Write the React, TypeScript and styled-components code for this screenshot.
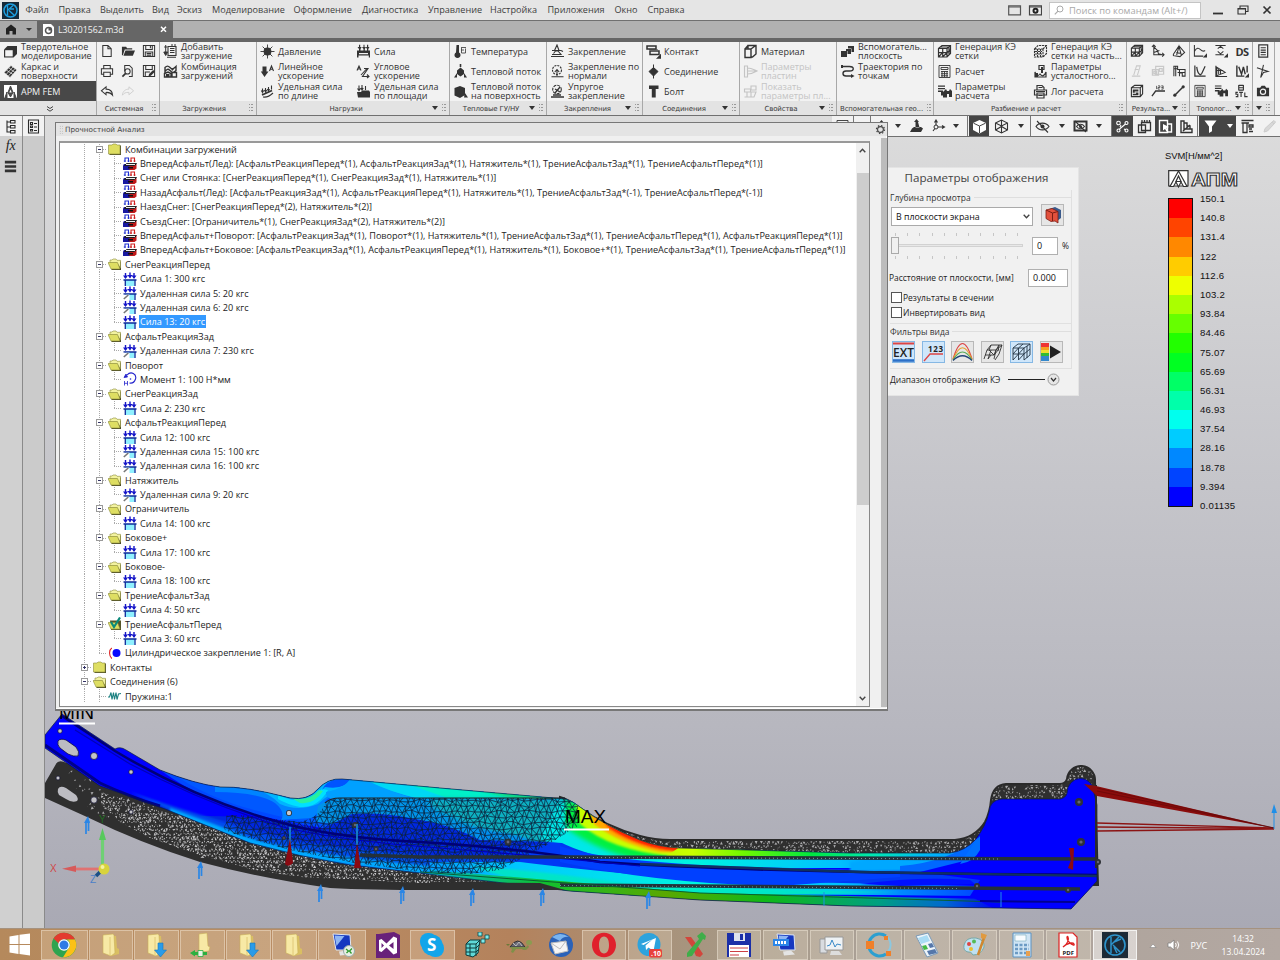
import React, { ReactNode } from 'react';
import styled, { createGlobalStyle, css } from 'styled-components';

const UI = '"Open Sans", "Noto Sans", sans-serif';
const SMALL = '"DejaVu Sans", "Open Sans", sans-serif';

const Global = createGlobalStyle`
  * { box-sizing: border-box; }
  body { margin: 0; font-family: ${UI}; color: #2b2b2b; overflow: hidden; background: #c4c4c8; }
  svg { display: block; flex: none; }
`;

const Screen = styled.div`
  width: 1280px; height: 960px; display: flex; flex-direction: column; overflow: hidden;
`;

/* ---------- menu bar ---------- */
const MenuBar = styled.header`
  height: 21px; flex: none; display: flex; align-items: center; background: #e5e5e5;
  border-bottom: 1px solid #707070; padding-left: 2px;
`;
const Menu = styled.nav`display: flex; margin-left: 6.500px; flex: 1;`;
const MenuItem = styled.span<{ $w: number }>`
  width: ${p => p.$w}px; font-size: 9.1px; line-height: 20px; white-space: nowrap; color: #3c3c3c;
`;
const Search = styled.div`
  width: 152px; height: 17px; background: #fff; border: 1px solid #c4c4c4; display: flex; align-items: center;
  padding-left: 4px; gap: 5px; color: #a9a9a9; font-size: 9.4px; white-space: nowrap; margin: 0 11px 0 7px;
`;
const WindowButtons = styled.div`display: flex; align-items: center; gap: 13px; width: 68px;`;

/* ---------- tab bar ---------- */
const TabBar = styled.div`
  height: 21px; flex: none; display: flex; background: #b1b1b1; border-bottom: 4px solid #666;
`;
const HomeTab = styled.div`
  width: 37px; height: 17px; display: flex; align-items: center; gap: 9px; padding-left: 5px; background: #a9a9a9;
`;
const DocTab = styled.div`
  width: 136px; background: #666; color: #f2f2f2; display: flex; align-items: center; padding-left: 5px; gap: 4px;
  font-size: 8.8px; height: 17px;
`;
const DocName = styled.span`flex: 1; line-height: 17px; padding-top: 1px;`;

/* ---------- ribbon ---------- */
const Ribbon = styled.div`
  height: 74px; flex: none; display: flex; background: #f2f2f2; border-bottom: 1px solid #707070;
`;
const Group = styled.section<{ $w: number }>`
  width: ${p => p.$w}px; flex: none; display: flex; flex-direction: column; border-right: 1px solid #a8a8a8;
`;
const GroupBody = styled.div`display: flex; height: 60px; flex: none; margin-top: -1px;`;
const Column = styled.div<{ $w: number }>`width: ${p => p.$w}px; display: flex; flex-direction: column; flex: none;`;
const Command = styled.div<{ $state?: 'off' | 'on' }>`
  height: 20px; display: flex; align-items: center; gap: 3px; padding-left: 3px; font-size: 9px; line-height: 9px;
  white-space: pre; color: #333; overflow: visible;
  ${p => p.$state === 'off' && css`color: #c4c4c4;`}
  ${p => p.$state === 'on' && css`background: #484848; color: #f4f4f4;`}
`;
const GroupFoot = styled.div`
  flex: 1; background: #e3e3e3; display: flex; align-items: center; font: 7px ${SMALL}; letter-spacing: -0.15px;
  color: #3a3a3a; padding: 0 3px 0 3px; white-space: nowrap; overflow: hidden;
`;
const FootName = styled.span`flex: 1; text-align: center; padding-top: 1px;`;
const Grip = styled.i`
  width: 4px; height: 7px; flex: none; margin-left: 4px; margin-bottom: 2px;
  background: repeating-linear-gradient(#999 0 1px, transparent 1px 3px);
  mask: linear-gradient(90deg, #000 0 1.5px, transparent 1.5px 2.5px, #000 2.5px);
`;
const Caret = styled.i<{ $light?: boolean }>`
  border: 3.5px solid transparent; border-top: 4px solid ${p => (p.$light ? '#fff' : '#333')}; border-bottom: 0; flex: none;
`;
const IconGrid = styled.div<{ $cols: number }>`
  display: grid; grid-template-columns: repeat(${p => p.$cols}, 20.8px); grid-auto-rows: 20px;
  place-items: center; width: 100%; color: #333;
`;
const Dim = styled.span`color: #c9c9c9;`;
const DsText = styled.b`font-size: 11px; letter-spacing: -0.6px; font-weight: 700;`;

/* ---------- work area ---------- */
const Work = styled.div`flex: 1; display: flex; min-height: 0; position: relative;`;
const SideBar = styled.aside<{ $bg: string }>`
  width: 22.5px; flex: none; background: ${p => p.$bg}; border-right: 1px solid #8a8a8a;
  display: flex; flex-direction: column; align-items: center;
`;
const SideButton = styled.div<{ $active?: boolean }>`
  width: 100%; height: 20px; display: flex; justify-content: center; align-items: center;
  background: ${p => (p.$active ? '#f2f2f2' : 'transparent')};
`;
const Fx = styled.i`font: italic 14px "Liberation Serif", serif; color: #222;`;
const Viewport = styled.main`
  flex: 1; position: relative; overflow: hidden;
  background: linear-gradient(#dcdcdc 0, #cacace 35%, #b7b7bf 75%, #a9a9b4 100%);
`;
const Scene = styled.svg`position: absolute; left: 0; top: 0;`;

const ViewToolbar = styled.div`
  position: absolute; right: 0; top: 0; height: 21px; width: 448px; display: flex; align-items: center;
  background: #f2f2f2; border-bottom: 1px solid #707070; color: #333;
`;
const Tool = styled.div<{ $w: number; $active?: boolean; $sep?: boolean }>`
  width: ${p => p.$w}px; height: 20px; display: flex; align-items: center; justify-content: center; gap: 9px; flex: none;
  ${p => p.$active && css`background: #454545; color: #fff;`}
  ${p => p.$sep && css`border-right: 1px solid #777;`}
`;

/* ---------- legend ---------- */
const Legend = styled.div`
  position: absolute; left: 1123px; top: 34px; font-family: "Liberation Sans", sans-serif; color: #111; width: 100px;
`;
const LegendTitle = styled.div`font-size: 9.4px; line-height: 11px; margin-left: -3px;`;
const LegendLogo = styled.div`height: 18px; margin: 9px 0 10px 0;`;
const LegendBody = styled.div`display: flex; gap: 7px;`;
const LegendBar = styled.div`width: 25px; border: 1px solid #111; height: 309px; display: flex; flex-direction: column;`;
const Swatch = styled.div<{ $c: string }>`background: ${p => p.$c}; flex: 1;`;
const LegendValues = styled.div`margin-top: -9px;`;
const LegendValue = styled.div`height: 19.2px; line-height: 19.2px; font-size: 9.6px; letter-spacing: 0.2px;`;

/* ---------- display parameters ---------- */
const Params = styled.div`
  position: absolute; left: 840px; top: 51px; width: 194px; height: 229px; background: #f1f1f1;
  padding-left: 4px; border: 1px solid #e4e4e4; font-size: 8.45px; color: #222; white-space: nowrap;
`;
const ParamsTitle = styled.h2`
  margin: 0; font-size: 11.6px; font-weight: 400; text-align: center; line-height: 20px; height: 22px; color: #444;
  padding-right: 18px; padding-left: 3px;
`;
const FieldSet = styled.div<{ $h: number }>`
  height: ${p => p.$h}px; margin-right: 6px; border-bottom: 1px solid #e0e0e0; border-right: 1px solid #e0e0e0;
`;
const Caption = styled.div`
  line-height: 11px; height: 14px; display: flex; align-items: center; gap: 3px; color: #333;
  &::after { content: ''; flex: 1; border-top: 1px solid #dedede; }
`;
const Row = styled.div<{ $h: number }>`height: ${p => p.$h}px; display: flex; align-items: center;`;
const Select = styled.div`
  width: 142px; height: 19px; border: 1px solid #aaa; background: #fff; display: flex; align-items: center;
  justify-content: space-between; padding: 0 2px 0 4px; font-size: 8.8px; margin: 3px 8px 0 1px; color: #111;
`;
const SquareButton = styled.div<{ $on?: boolean }>`
  width: 23px; height: 22px; display: flex; align-items: center; justify-content: center;
  background: ${p => (p.$on ? '#cfe6fa' : '#e6e6e6')}; border: 1px solid ${p => (p.$on ? '#86b8e4' : '#b8b8b8')};
`;
const SliderBox = styled.div`
  width: 134px; height: 26px; margin-left: 1px; display: flex; flex-direction: column; justify-content: space-between;
`;
const Ticks = styled.div`display: flex; justify-content: space-between; padding: 0 7px 0 4px;`;
const Tick = styled.i`width: 1px; height: 3px; background: #c6c6c6;`;
const Track = styled.div`height: 3px; border: 1px solid #d2d2d2; background: #e8e8e8; display: flex; align-items: center; margin-right: 2px;`;
const Thumb = styled.div`width: 8px; height: 17px; flex: none; background: #f0f0f0; border: 1px solid #aaa; margin-left: -1px;`;
const NumField = styled.div<{ $w: number }>`
  width: ${p => p.$w}px; height: 18px; border: 1px solid #b0b0b0; background: #fff; padding-left: 4px; line-height: 15px; font-size: 9px; color: #111;
`;
const Percent = styled(Row)`gap: 4px; margin-left: 7px;`;
const Distance = styled.span`width: 139px; margin-left: -1px;`;
const Check = styled.label`display: flex; align-items: center; gap: 1px; height: 15.3px; margin-left: 1px;`;
const CheckBox = styled.i`width: 11px; height: 11px; border: 1px solid #555; background: #fff;`;
const FilterRow = styled.div`display: flex; gap: 6.6px; margin: 3px 0 0 2px;`;
const RangeLine = styled.i`width: 37px; border-top: 1px solid #222; margin: 0 2px 0 8px;`;

/* ---------- strength analysis window ---------- */
const Dialog = styled.div`
  position: absolute; left: 55px; top: 6px; width: 833px; height: 589px; background: #f0f0f0; border: 1px solid #777;
  border-width: 1px 1px 2px 1px; display: flex; flex-direction: column; box-shadow: inset -1px -1px 0 #fff;
`;
const DialogTitle = styled.div`
  height: 13px; flex: none; background: #e4e4e4; display: flex; align-items: center; font: 7.25px ${SMALL}; color: #444;
  padding: 0 1px 0 3px; gap: 2px;
`;
const TitleGrip = styled.i`
  width: 4px; height: 9px; background: radial-gradient(#aaa 0.6px, transparent 0.8px) 0 0 / 2.5px 2.5px;
`;
const TitleText = styled.span`flex: 1;`;
const DialogBody = styled.div`flex: 1; display: flex; padding: 5px 0 2px 3px; min-height: 0;`;
const TreeBox = styled.div`
  width: 811px; flex: none; border: 1px solid #888; border-top: 2px solid #999; background: #fff; display: flex; overflow: hidden;
`;
const Tree = styled.div`flex: 1; overflow: hidden; padding-left: 17px; margin-top: -1px;`;
const Scroll = styled.div`width: 13px; background: #f0f0f0; display: flex; flex-direction: column; align-items: center;`;
const ScrollEnd = styled.div<{ $h: number; $low?: boolean }>`
  height: ${p => p.$h}px; display: flex; padding: 5px 0; align-items: ${p => (p.$low ? 'flex-end' : 'flex-start')};
`;
const ScrollThumb = styled.div`width: 12px; height: 333px; background: #cdcdcd;`;
const OuterScroll = styled.div`width: 6px; background: #bcbcbc; margin: -3px 0 0 11px;`;

const TreeRow = styled.div`height: 14.4px; display: flex; align-items: center; white-space: nowrap;`;
const Guide = styled.span<{ $kind: 'line' | 'tee' | 'elbow' | 'blank' }>`
  width: 15px; height: 14.4px; flex: none; display: flex; align-items: center; justify-content: center;
  background-repeat: no-repeat;
  ${p => p.$kind !== 'blank' && css`
    background-image: repeating-linear-gradient(#aaa 0 1px, transparent 1px 2px)
      ${p.$kind !== 'line' ? ', repeating-linear-gradient(90deg, #aaa 0 1px, transparent 1px 2px)' : ''};
    background-size: 1px ${p.$kind === 'elbow' ? '50%' : '100%'}, 8px 1px;
    background-position: 7px 0, 7px 7px;
  `}
`;
const Expander = styled.b<{ $plus?: boolean }>`
  width: 7px; height: 7px; border: 1px solid #9a9a9a; display: block; background-color: #fff; background-repeat: no-repeat;
  background-image: linear-gradient(#336, #336)${p => p.$plus && ', linear-gradient(#336, #336)'};
  background-size: 3px 1px, 1px 3px; background-position: center;
`;
const NodeIcon = styled.span`width: 17px; display: flex; padding-left: 1px; flex: none;`;
const NodeText = styled.span<{ $sel?: boolean }>`
  font-size: 9.1px; line-height: 13px; color: #1c1c1c; padding: 0 1px;
  ${p => p.$sel && css`background: #3399ff; color: #fff;`}
`;

/* ---------- task bar ---------- */
const TaskBar = styled.footer`
  height: 32px; flex: none; display: flex; padding-top: 1px; border-top: 1px solid #a5927f;
  background: linear-gradient(90deg, #b5895c 0, #b98d64 22%, #b4825c 40%, #ab8d72 48%, #a69681 55%, #aaa096 68%, #b3a8a2 100%);
`;
const Task = styled.div<{ $w: number; $tile?: boolean; $active?: boolean }>`
  width: ${p => p.$w - 1.3}px; margin-right: 1.3px; height: 30px; flex: none; display: flex; align-items: center; justify-content: center;
  ${p => p.$tile && css`background: rgba(255,245,225,.22); border: 1px solid rgba(255,248,235,.38);`}
  ${p => p.$active && css`background: rgba(255,255,255,.5); border: 1px solid rgba(255,255,255,.7);`}
`;
const Tray = styled.div`
  flex: 1; display: flex; align-items: center; color: #fff; font-size: 9px; padding-left: 10px; white-space: nowrap;
`;
const Speaker = styled.span`margin-left: 10px;`;
const Lang = styled.span`margin-left: 10px; width: 31px;`;
const Clock = styled.div`font-size: 8.5px; line-height: 13.5px; text-align: center; width: 43px;`;

/* ---------- icons ---------- */
const line = { fill: 'none', stroke: 'currentColor', strokeWidth: 1.1 } as const;
const solid = { fill: 'currentColor' } as const;
const I = ({ children, s = 15 }: { children: ReactNode; s?: number }) => (
  <svg width={s} height={s} viewBox="0 0 15 15">{children}</svg>
);

const icons: Record<string, ReactNode> = {
  solid: <><path d="M1 5.500 4.500 2H14v8l-3.500 3.500H1z" {...solid} /><path d="M2.200 6.200h7.500v6.200H2.200z" fill="#f2f2f2" /></>,
  surface: <path d="M1 8.500 8 1.500l6 4.500-7 7.500zM3.400 6.100l6.600 4.400M5.700 3.800l6.300 4.700M3.200 10.300 10 3M5.400 12 12 4.600" fill="#333" stroke="#f2f2f2" strokeWidth=".7" />,
  apm: <><rect x="1" y="1" width="13" height="13" fill="#fff" /><path d="M7.500 2 5 8.500 7.500 13 10 8.500zM4 14V8L1.800 14M11 14V8l2.200 6" fill="#484848" stroke="#484848" /><path d="M6.300 8.500h2.400L7.500 5.500z" fill="#fff" /></>,
  file: <path d="M3 1.500h5.500L12 5v8.500H3zM8.500 1.500V5H12" {...line} />,
  open: <path d="M1 12V3h4.500l1 1.500H12V6H4l-2 6zM4.800 7H15l-2.300 5.500H2.600z" {...solid} />,
  save: <path d="M1.500 1.500h12v12h-12zM4 1.500v4.300h7V1.500M3.500 13.500V8.500h8v5M9 2v2.500M5 10.300h5M5 12h5" {...line} />,
  print: <path d="M4 5V1.500h7V5M4 11H1.500V5h12v6H11M4 8.800h7v4.700H4z" {...line} />,
  preview: <><path d="M4 8V1.500h5L12 4.500v9H8.500" {...line} /><circle cx="7" cy="8" r="2.800" {...line} /><path d="m5 10-3.500 3.500" stroke="currentColor" strokeWidth="1.800" /></>,
  saveas: <><path d="M1.500 1.500h12v12h-12zM4 1.500v4.300h7V1.500M3.500 13.500V8.500h5" {...line} /><path d="m7 13 .6-2.300L12 6.500l1.800 1.700L9.500 12.500z" {...solid} /></>,
  undo: <path d="M6.500 3 1.500 7.300l5 4.200V9c3.500-.2 5.500.8 7 3-.2-4-3-6.500-7-6.500z" {...line} />,
  redo: <path d="m8.500 3 5 4.300-5 4.200V9c-3.500-.2-5.500.8-7 3 .2-4 3-6.500 7-6.500z" fill="none" stroke="#cfcfcf" />,
  addload: <><path d="M5 2.500h8v9H5zM7 4.500h4.500M7 6.500h4.500M7 8.500h4.500M4 13.300h9" {...line} /><path d="M2.700 1v8M1.200 3h3M.8 8h3.800L2.700 11.500zM9 0v2M12 0v2" stroke="currentColor" fill="currentColor" /></>,
  comb: <><path d="M2 3.500c2-2 3-2 5 0s3 2 6-1v4c-3 3-4 2-6 0S4 5 2 7.500zM1.500 9.500 5 8l3 1.500v3.500H1.500zM9 8.500h4.500V13H9z" {...line} strokeWidth="1.400" /><path d="M3 10h3.500v3H3zM8 4l3 1-2 2z" {...solid} /></>,
  pressure: <><circle cx="7.500" cy="7.500" r="3.900" {...solid} /><path d="M7.500.5v14M.5 7.500h14M2.600 2.600l9.800 9.800M12.400 2.600l-9.800 9.800" stroke="currentColor" strokeWidth=".9" /></>,
  force: <path d="M1 13.500V6.500h2V5L1.500 3H3V.8h1.200V3h1.500L4.500 5v1.500h3V5L6 3h1.500V.8h1V3H10L8.800 5v1.500H11V5L9.800 3H11V.8h1.200V3h1.300L12.300 5v1.500H14v7h-1.200v-2H2.500v2zM3 9v1.200h9V9z" {...solid} />,
  linacc: <><path d="M2.500 2.500h4v5h2l-4 5.500L.8 7.500h1.700z" {...solid} /><path d="m9.500 7 2-5 2 5M10.200 5.300h2.500" {...line} /></>,
  angacc: <path d="M1 6.500 3 2l2 4.500M1.700 5h2.500M5 11 10.500 5M8 4.500h4L6.500 12.500h6M11 10.500l2 2-2 1.500" {...line} />,
  linforce: <><path d="m2 11 10-4.500" {...line} strokeWidth="1.800" /><path d="M2.500 9.500V4.500M5.500 8.500V4M8.500 7V3M11.500 5.500V1.500M1.300 6.500l1.200 2 1.200-2M4.400 6l1.200 2 1-2M7.300 5l1.200 2 1-2M3 13c4 .5 7-1 10-4" {...line} /></>,
  areaforce: <><path d="M1 8h4l1-1.500h7L14 8v5.500H2z" {...solid} /><path d="M3 1.500v5M6 1v5M9.500 2v4M1.500 4.500 3 6.500l1.500-2M4.800 4 6 6l1.300-2" {...line} /></>,
  temp: <><path d="M3.500 1h2.500v7.500a3 3 0 1 1-3 0z" {...solid} /><path d="M8 3.500h5M8 6h3M8.500 4v5h4V4.500" {...line} strokeWidth=".8" /></>,
  heat: <><path d="m7.500 3.500 3.500 3v3.500l-3.500 2.500L4 10V6.500zM1 13.500 4 9v4.500zM14 13.500 11 9v4.500zM6.700 0h1.600v3H6.700z" {...solid} /></>,
  heatsurf: <path d="m1.500 4 5.500-2 5 2v7l-5 3-5.500-2.500zM12 9l3 4.500h-4z" {...solid} />,
  fix: <path d="M1 12.500h13M2 10.500h9L8 7H5.500L3.500 9.500M4.500 6.500 7 1l2 5.500M2 6.500h9l2 1" {...line} />,
  fixn: <><circle cx="7" cy="6" r="4.500" {...line} strokeDasharray="2 1" /><path d="M1.500 12.800h12M7 12V6M4.800 8 7 5.500 9.200 8" {...line} /></>,
  fixe: <><circle cx="7" cy="5.500" r="4.300" {...line} strokeDasharray="3 1" /><path d="M1 13h13M3 11h8M5 9l5-6M5 5l5 3" {...line} strokeWidth="1.300" /></>,
  contact: <><path d="M1 2h9v3H1zM4 7h9v3.500H4z" {...line} strokeWidth="1.500" /><path d="M3 5.500h9M15 10v4.500h-4.500z" {...solid} stroke="currentColor" strokeWidth=".5" /></>,
  joint: <><path d="M7.500.5v14M3 7.500l4.500-4 4.500 4-4.500 4.500z" {...solid} stroke="currentColor" /></>,
  bolt: <path d="M3 1.500h9.500v3.500h-2.800v8.500H5.800V5H3z" {...solid} />,
  material: <><path d="M2 5h6v8.500H2zM5 5V1.500h8V10l-3.500 3H8M5 1.500 2 5M8 5l4-3" {...line} strokeWidth="1.400" /></>,
  plate: <path d="M1.500 2h3v11h-3zM4.500 4c4 0 6 1.500 9.500 3-3.500 2-5.500 3-9.500 3M5 7h8" {...line} />,
  plateshow: <path d="M1.500 5h6v3h-6zM4 8v5M1.500 13h6M8 2h5v4H8zM8 8h5l-2 5H8z" {...line} />,
  plane: <path d="M1 7h6v6H1zM6 5h5v5H7.500V7H6zM8 2h6v6h-2.500V4.500H8z" {...solid} />,
  path: <><path d="M1.500 2.500h8c5 0 5 4.500 0 4.500H6c-4 0-4 5 0 5h6" {...line} strokeWidth="1.400" /><path d="m11 10 3.500 2-3.500 2zM1 1h2v3H1z" {...solid} /></>,
  mesh: <path d="M1.500 4.500 5 1.500h8.500v8L10 13H1.500zM1.500 4.500H10V13M10 4.500l3.500-3M1.500 8.700H10l3.500-3M5.700 4.500V13M1.500 13l4-4.300M10 8.700 5.700 13M4 3h8v8" {...line} strokeWidth="1.200" />,
  meshpart: <path d="M1.500 5 5 1.500h8.500v8L10 13H1.500zM10 5v8M10 5l3.500-3.500M2 5h8M2 7.500h7M2 10h7M4.500 5v8M7.500 5v8" {...line} strokeDasharray="2.200 .8" />,
  calc: <path d="M2 1.500h11v12H2zM4 3.500h7v2H4zM4 7.500h7M4 9.700h7M4 11.800h7M5 7v6M7.500 7v6M10 7v6" {...line} strokeWidth=".9" />,
  calcpar: <><path d="M1 1.500h7v1.200H1zM1 4h7v1.300H1zM1 6.500h5v5H4V8H1zM7 7l2-2 1 2h2l1-2 2 2v6h-3V10h-2v3.500H6V8z" {...solid} /></>,
  fatigue: <><path d="M6 1.500h5v4H6zM2 8c1 4 3 4.500 5 2 2 3 4.500 2 6-2v5H2z" {...line} strokeWidth="1.200" /><path d="M2 9h3v4H2zM8 3h2v6H8z" {...solid} /></>,
  log: <><path d="M4 6V1.500h5l2 2V6M1.500 6h12v5h-12zM4 9h7v5H4z" {...line} strokeWidth="1.200" /><path d="M5.500 3.500h4M3 7.500h9M5.500 11.500h4" {...line} /></>,
  r2: <path d="M3 1v10.500h11M3 3l4 4 1 3.500 4 1M1 3l2-2 2 2M12 9.500l2 2-2 2M3 9l6-2" {...line} />,
  r3: <path d="m1.500 11 6-9 6 7-5 4.500-7-1zM5 12l2.500-9.500L10 12M4.500 9.500l5 .5" {...line} />,
  r4: <path d="M2 13h9M4 12l3-10h4L8 12M5 6h4" {...line} />,
  r5: <path d="M5 2.500h8.500V11H5zM1.500 6H8v6H1.500zM3 8h3v2H3zM9 5h3v3H9z" {...line} strokeWidth="1.300" />,
  r6: <path d="M2 13V2.500h4V6h8v7H11V9.500H8M2 5h4M4 13V2M8 13V6M6 9h8" {...line} />,
  r7: <><path d="M1.500 4 5 1.500h8.500v9L11 13.500H1.500zM1.500 4H11v9.500M11 4l2.500-2.500" {...line} strokeWidth="1.200" /><path d="M3 6h6v2H5v1h4v3H3v-1.500h3.500V9.500H3z" {...solid} /></>,
  r8: <><path d="m1 13 4-5.500h10" {...line} strokeWidth="1.400" /><path d="M6 2v3.500M7.500 2h2v1.800h-2v1.700h2M11 2h2v3.500h-2M11 3.700h2" {...line} strokeWidth=".8" /></>,
  r9: <><path d="M3 12 12 3" stroke="currentColor" strokeWidth="1.600" fill="none" /><circle cx="3" cy="12" r="1.700" {...solid} /><circle cx="12" cy="3" r="1.700" {...solid} /></>,
  t1: <><path d="M1.500 1v12H11M1.500 8C4 3.500 6 4 8 6s3 2.500 5 1" {...line} /><path d="M15 10v4.500h-4.500z" {...solid} /></>,
  t2: <><path d="M1.500 1.500h11M1.500 11.500h9M4 5l3-2.500L10 5M4 8l3 2.500L10 8" {...line} /><path d="M15 10v4.500h-4.500z" {...solid} /></>,
  t4: <path d="M2 1.500v11.500h11.500M4 3c1 8 4 10 5.500 7L13 2.500" {...line} strokeWidth="1.300" />,
  t5: <path d="M2 2v11.500h12M2 3l10 6-10 4M3 4v8M5 5v6M7 6v5M3 7h7" {...line} strokeWidth="1.100" />,
  t6: <><path d="M2 1.500v11.500h8M4 3l3 8 2-8 2 8M13 2v7" {...line} strokeWidth="1.500" /><path d="M15 10v4.500h-4.500z" {...solid} /></>,
  stl: <><path d="M4 1.500h5M4 4h5M4 6.500h5M4 1v6M9 1v6M3 9h-2v2h2v2.500H.8M4.500 9h4M6.500 9v5M10.500 9v4.500h3" {...line} strokeWidth="1.200" /></>,
  list: <path d="M3 1h9.500v13H3zM5 4h5.500M5 6.500h5.500M5 9h5.500M5 11.500h5.500" {...line} strokeWidth="1.300" />,
  cut: <path d="m1 4 12 4-5 1-3 5.500L8 1" {...line} />,
  camera: <><path d="M1 4h3.500L6 2h3.500L11 4h3v9H1z" {...solid} /><circle cx="7.500" cy="8.300" r="2.800" fill="none" stroke="#f2f2f2" strokeWidth="1.200" /></>,
  treeico: <path d="M4 1.500v12M4 3h3M4 8h3M4 13h3M7.500 1.500H12v2.500H7.500zM7.500 6.500H12v2.500H7.500zM7.500 11.500H12V14H7.500z" {...line} />,
  props: <path d="M2.500 1h10v13h-10zM4.500 3.500h2v2h-2zM4.500 7h2v1.500h-2zM4.500 10.500h2v1.500h-2zM8 4.500h3M8 8h3M8 11.500h3" {...line} />,
  burger: <path d="M1 2.500h13M1 7.500h13M1 12.500h13" stroke="#333" strokeWidth="3" />,
  place: <><path d="M3 9.500 5 8h7l2 1.500-2 3.500H1zM6.500 2v6.500h4L9 3h1L7.500 0 5 3h1.500z" {...solid} /></>,
  axes: <><path d="M5 8V1.500M5 8h8M5 8l-3 4M3.500 3.500 5 1l1.500 2.500M11 6.500 13.500 8 11 9.500" {...line} /><circle cx="5" cy="8" r="2" fill="#f2f2f2" stroke="currentColor" /></>,
  cube: <><path d="m1 4 6.500-3L14 4v7l-6.500 3.500L1 11z" {...solid} /><path d="M1.500 4.200 7.500 7l6-2.800M7.500 7v7" stroke="#454545" fill="none" /></>,
  wire: <path d="m1.500 4 6-3L13.500 4v7l-6 3-6-3zM1.500 4l6 3 6-3M7.500 7v7M1.500 11l6-3.500 6 3.500M7.500 1v7" {...line} />,
  eye: <><path d="M1 7.500c3-4.500 10-4.500 13 0-3 4.500-10 4.500-13 0zM2 2l11 11.500" {...line} /><circle cx="7.500" cy="7.500" r="2" {...solid} /></>,
  cam2: <><path d="M1.500 2.500h12v9h-12z" {...line} strokeWidth="2" /><path d="M3.500 7.500c2-3 6-3 8 0-2 3-6 3-8 0zM2 2l11 11" {...line} /><circle cx="7.500" cy="7.500" r="1.500" {...solid} /></>,
  snap: <><circle cx="3.500" cy="4" r="1.800" {...line} /><circle cx="11.500" cy="4" r="1.500" {...line} /><circle cx="3.500" cy="11.500" r="1.500" {...line} /><circle cx="11.500" cy="11.500" r="1.500" {...line} /><path d="m4.500 10 6-5M5 8l1-2M9 10l2 1" {...line} /></>,
  grid2: <path d="M4.500 3.500h9v8h-9zM1.500 6h7v7.500h-7zM5 1v2M7.500 1v2M10 1v2M12.500 1v2" {...line} strokeWidth="1.300" />,
  sel: <><path d="M1.500 1.500h8v12h-8zM9.500 5h4v8h-4z" {...line} strokeWidth="1.400" /><path d="m5 5 6 3-2.500 1 1.500 3-1.500.5L7 10l-2 1.500z" {...solid} /></>,
  ruler: <path d="M2 2h3v8h8v3.500H2zM5 4h3v3h3v3M4 12l7-6" {...line} strokeWidth="1.400" />,
  funnel: <path d="M1.500 1.500h12L9 7.500v4.800L6 14V7.500z" {...solid} />,
  scheme: <path d="M1.500 1.500h12M1.500 4H9M3 4v9.500h4V4M9 6h4v2H9zM9 10h3M9 12.500h4" {...line} strokeWidth="1.300" />,
  pen: <path d="m2 13 1-3.500L10 3l2 2-6.500 7zM10 3l2-1.500L13.500 3 12 5" fill="#d8d8d8" stroke="#ccc" />,
};
const Icon = ({ n, s }: { n: string; s?: number }) => <I s={s}>{icons[n]}</I>;

const Gear = () => (
  <svg width="11" height="11" viewBox="0 0 11 11">
    <circle cx="5.500" cy="5.500" r="2.900" fill="none" stroke="#444" strokeWidth="1.100" />
    <circle cx="5.500" cy="5.500" r="4" fill="none" stroke="#444" strokeWidth="1.300" strokeDasharray="1.400 1.740" />
  </svg>
);
const Chevron = ({ up }: { up?: boolean }) => (
  <svg width="7" height="5" viewBox="0 0 7 5"><path d={up ? 'M.7 4.200 3.500 1.300 6.300 4.200' : 'M.7.8 3.500 3.700 6.300.8'} fill="none" stroke="#444" strokeWidth="1.400" /></svg>
);

/* ---------- ribbon data ---------- */
type Cmd = [string, string, ('off' | 'on')?];
const groups: { name: string; w: number; caret?: boolean; cols: { w: number; items: Cmd[] }[] }[] = [
  { name: 'Загружения', w: 97, cols: [{ w: 96, items: [['addload', 'Добавить\nзагружение'], ['comb', 'Комбинация\nзагружений']] }] },
  { name: 'Нагрузки', w: 193, caret: true, cols: [
    { w: 96, items: [['pressure', 'Давление'], ['linacc', 'Линейное\nускорение'], ['linforce', 'Удельная сила\nпо длине']] },
    { w: 96, items: [['force', 'Сила'], ['angacc', 'Угловое\nускорение'], ['areaforce', 'Удельная сила\nпо площади']] }] },
  { name: 'Тепловые ГУ/НУ', w: 97, caret: true, cols: [{ w: 96, items: [['temp', 'Температура'], ['heat', 'Тепловой поток'], ['heatsurf', 'Тепловой поток\nна поверхность']] }] },
  { name: 'Закрепления', w: 96, caret: true, cols: [{ w: 96, items: [['fix', 'Закрепление'], ['fixn', 'Закрепление по\nнормали'], ['fixe', 'Упругое\nзакрепление']] }] },
  { name: 'Соединения', w: 97, caret: true, cols: [{ w: 96, items: [['contact', 'Контакт'], ['joint', 'Соединение'], ['bolt', 'Болт']] }] },
  { name: 'Свойства', w: 97, caret: true, cols: [{ w: 96, items: [['material', 'Материал'], ['plate', 'Параметры\nпластин', 'off'], ['plateshow', 'Показать\nпараметры пл...', 'off']] }] },
  { name: 'Вспомогательная гео...', w: 97, cols: [{ w: 96, items: [['plane', 'Вспомогатель...\nплоскость'], ['path', 'Траектория по\nточкам']] }] },
  { name: 'Разбиение и расчет', w: 193, cols: [
    { w: 96, items: [['mesh', 'Генерация КЭ\nсетки'], ['calc', 'Расчет'], ['calcpar', 'Параметры\nрасчета']] },
    { w: 96, items: [['meshpart', 'Генерация КЭ\nсетки на часть...'], ['fatigue', 'Параметры\nусталостного...'], ['log', 'Лог расчета']] }] },
];
const menu: [string, number][] = [['Файл', 33], ['Правка', 41.5], ['Выделить', 52], ['Вид', 25], ['Эскиз', 35], ['Моделирование', 81.5], ['Оформление', 68.5], ['Диагностика', 66], ['Управление', 62], ['Настройка', 57.5], ['Приложения', 67], ['Окно', 33], ['Справка', 50]];

/* ---------- tree data ---------- */
type Kind = 'folder' | 'open' | 'check' | 'comb' | 'force' | 'remote' | 'moment' | 'cyl' | 'spring';
type Node = { d: number; t: string; k: Kind; last?: boolean; sel?: boolean; exp?: '-' | '+' };
const f = (t: string, k: Kind = 'open'): Node => ({ d: 2, t, k, exp: '-' });
const c = (t: string, k: Kind = 'force', last = false, sel = false): Node => ({ d: 3, t, k, last, sel });
const nodes: Node[] = [
  f('Комбинации загружений', 'folder'),
  c('ВпередАсфальт(Лед): [АсфальтРеакцияПеред*(1), АсфальтРеакцияЗад*(1), Натяжитель*(1), ТрениеАсфальтЗад*(1), ТрениеАсфальтПеред*(1)]', 'comb'),
  c('Снег или Стоянка: [СнегРеакцияПеред*(1), СнегРеакцияЗад*(1), Натяжитель*(1)]', 'comb'),
  c('НазадАсфальт(Лед): [АсфальтРеакцияЗад*(1), АсфальтРеакцияПеред*(1), Натяжитель*(1), ТрениеАсфальтЗад*(-1), ТрениеАсфальтПеред*(-1)]', 'comb'),
  c('НаездСнег: [СнегРеакцияПеред*(2), Натяжитель*(2)]', 'comb'),
  c('СъездСнег: [Ограничитель*(1), СнегРеакцияЗад*(2), Натяжитель*(2)]', 'comb'),
  c('ВпередАсфальт+Поворот: [АсфальтРеакцияЗад*(1), Поворот*(1), Натяжитель*(1), ТрениеАсфальтЗад*(1), ТрениеАсфальтПеред*(1), АсфальтРеакцияПеред*(1)]', 'comb'),
  c('ВпередАсфальт+Боковое: [АсфальтРеакцияЗад*(1), АсфальтРеакцияПеред*(1), Натяжитель*(1), Боковое+*(1), ТрениеАсфальтЗад*(1), ТрениеАсфальтПеред*(1)]', 'comb', true),
  f('СнегРеакцияПеред'), c('Сила 1: 300 кгс'), c('Удаленная сила 5: 20 кгс', 'remote'), c('Удаленная сила 6: 20 кгс', 'remote'), c('Сила 13: 20 кгс', 'force', true, true),
  f('АсфальтРеакцияЗад'), c('Удаленная сила 7: 230 кгс', 'remote', true),
  f('Поворот'), c('Момент 1: 100 Н*мм', 'moment', true),
  f('СнегРеакцияЗад'), c('Сила 2: 230 кгс', 'force', true),
  f('АсфальтРеакцияПеред'), c('Сила 12: 100 кгс'), c('Удаленная сила 15: 100 кгс', 'remote'), c('Удаленная сила 16: 100 кгс', 'remote', true),
  f('Натяжитель'), c('Удаленная сила 9: 20 кгс', 'remote', true),
  f('Ограничитель'), c('Сила 14: 100 кгс', 'force', true),
  f('Боковое+'), c('Сила 17: 100 кгс', 'force', true),
  f('Боковое-'), c('Сила 18: 100 кгс', 'force', true),
  f('ТрениеАсфальтЗад'), c('Сила 4: 50 кгс', 'force', true),
  f('ТрениеАсфальтПеред', 'check'), c('Сила 3: 60 кгс', 'force', true),
  { d: 2, t: 'Цилиндрическое закрепление 1: [R, A]', k: 'cyl', last: true },
  { d: 1, t: 'Контакты', k: 'folder', exp: '+' },
  { d: 1, t: 'Соединения (6)', k: 'open', exp: '-' },
  { d: 2, t: 'Пружина:1', k: 'spring' },
];

const forceArt = (
  <>
    <path d="M3 8h8.500v6H3z" fill="#8ff0ff" />
    <path d="M2.500 1v5M7 .5v4.500M11 1v5" stroke="#1414c8" strokeWidth="1.400" />
    <path d="M0 3.500h5L2.500 7zM4.500 3h5L7 6.500zM8.500 3.500h5L11 7z" fill="#1414c8" />
    <path d="M.5 8H13.500M2.300 8v6M12 8v6" stroke="#0a2a9a" strokeWidth="1.300" fill="none" />
  </>
);
const nodeArt: Record<Kind, ReactNode> = {
  folder: <><path d="M1.500 3.500H13v9.500H1.500z" fill="#55552a" /><path d="M.5 3h3.500l1-1h3l1 1H12v9H.5z" fill="#dede62" stroke="#8c8c3c" strokeWidth=".6" /></>,
  open: <><path d="M3.500 4.500H13V13H3.500z" fill="#4c4c26" /><path d="M2 3h2l1-1h3l1 1.300h3.500V11L9 6H2z" fill="#f2f2a0" stroke="#8c8c3c" strokeWidth=".6" /><path d="M0 5.500h9.500L12 12H3z" fill="#dede62" stroke="#8c8c3c" strokeWidth=".6" /></>,
  check: <><path d="M2 3.500h11V13H3z" fill="#55552a" /><path d="M0 5.500h9.500L12 12H3z" fill="#dede62" stroke="#8c8c3c" strokeWidth=".6" /><path d="m3 5 3 5 6-9.500" fill="none" stroke="#0a8a7a" strokeWidth="2.200" /></>,
  comb: <>
    <path d="M2 5V1h3.500V5M.8 4h2M4.500 4h2" fill="none" stroke="#2030d0" strokeWidth="1.100" /><path d="M8 5V1h3.500V5M7 4h2M10.500 4h2" fill="none" stroke="#d02020" strokeWidth="1.100" />
    <path d="M1 7h6v6H0V8.500z" fill="#1818a0" /><path d="M6.500 7h7v4.500L11.500 13h-5z" fill="#c01818" /><path d="m1.500 8.500 2-2h10l-2 2z" fill="#eee" stroke="#111" strokeWidth=".9" /><path d="M5 10h5v1.500H5z" fill="#111" />
  </>,
  force: forceArt,
  remote: <>{forceArt}<path d="M0 8.700h6.500V14H0z" fill="#fff" /><path d="m.8 13 4.500-4" stroke="#777" strokeWidth="1.600" /></>,
  moment: <><path d="M4 3c4-4.500 10-1 8.500 4-1 3-3.500 4.500-6 4" fill="none" stroke="#2222cc" strokeWidth="1.100" /><path d="M1.500 13.500v-4.500M4.500 13.500v-4.500M1.500 11.300h3M1 5.500l3.500-.5L3 2z" stroke="#2222cc" fill="#2222cc" strokeWidth=".8" /><circle cx="7.500" cy="7" r=".8" fill="#2222cc" /></>,
  cyl: <><circle cx="8.500" cy="7" r="4" fill="#0a0aff" /><path d="M3.800 2C.8 4 .8 10 3.800 12.500" fill="none" stroke="#d22" strokeWidth="1.100" /></>,
  spring: <path d="M0 8h1.500L3 3.500l1 7 1.500-7 1 7 1.500-7 1 7L10.500 5l2.500-.5" fill="none" stroke="#1a8080" strokeWidth="1.100" />,
};

const TreeLine = ({ n }: { n: Node }) => {
  const guides: ReactNode[] = [];
  for (let d = 1; d < n.d; d++) guides.push(<Guide key={d} $kind="line" />);
  return (
    <TreeRow>
      {guides}
      <Guide $kind={n.last ? 'elbow' : 'tee'}>{n.exp && <Expander $plus={n.exp === '+'} />}</Guide>
      <NodeIcon><svg width="14" height="14" viewBox="0 0 14 14">{nodeArt[n.k]}</svg></NodeIcon>
      <NodeText $sel={n.sel}>{n.t}</NodeText>
    </TreeRow>
  );
};

/* ---------- model ---------- */
let seed = 7;
const rnd = () => ((seed = (seed * 16807) % 2147483647) / 2147483647);
const makeMesh = (x0: number, y0: number, x1: number, y1: number, s: number, fill = 0.62) => {
  const cols = Math.ceil((x1 - x0) / s), rows = Math.ceil((y1 - y0) / s);
  const pts = Array.from({ length: rows + 1 }, (_, r) => Array.from({ length: cols + 1 }, (_, k) =>
    [x0 + (k + (r % 2) * 0.5) * s + (rnd() - 0.5) * s * 0.6, y0 + r * s + (rnd() - 0.5) * s * 0.6]));
  let d = '';
  let spots = '';
  const p = (a: number[]) => a[0].toFixed(1) + ' ' + a[1].toFixed(1);
  const tri = (a: number[], b: number[], e: number[]) => {
    d += 'M' + p(a) + 'L' + p(b) + 'L' + p(e) + 'z';
    if (rnd() < fill) {
      const cx = (a[0] + b[0] + e[0]) / 3, cy = (a[1] + b[1] + e[1]) / 3, q = 0.3 + rnd() * 0.35;
      const sh = (v: number[]) => p([cx + (v[0] - cx) * q, cy + (v[1] - cy) * q]);
      spots += 'M' + sh(a) + 'L' + sh(b) + 'L' + sh(e) + 'z';
    }
  };
  for (let r = 0; r < rows; r++) for (let k = 0; k < cols; k++) {
    const a = pts[r][k], b = pts[r][k + 1], e = pts[r + 1][k], g = pts[r + 1][k + 1];
    if (r % 2) { tri(a, b, g); tri(a, g, e); } else { tri(a, b, e); tri(b, g, e); }
  }
  return { d, spots };
};
const tabMesh = makeMesh(225, 795, 600, 885, 5.6);
const bodySpots = makeMesh(100, 780, 570, 890, 4, 0.85);
const thinSpots = makeMesh(45, 765, 300, 885, 4.5, 0.22);
const rightSpots = makeMesh(570, 765, 1100, 860, 4.2, 0.75);

const DARK_LEFT = 'M45 798V783L56 764Q58 760 64 762L85 770L120 778L180 800L300 830L420 850L640 850L640 889L430 890Q370 890 330 888Q260 878 200 862Q140 843 87 817Z';
const DARK_RIGHT = 'M560 797Q568 799 580 808Q605 826 640 836Q655 840 670 840H955Q975 838 985 822Q990 812 991 800Q993 785 1006 784H1060Q1065 784 1067 779A14 14 0 0 1 1095 781L1098 885H560Z';
const SKIN = 'M45 748V735L62 714L115 749Q120 746 126 750L160 770Q195 784 220 787Q245 786 290 798Q308 801 318 789Q328 778 342 779L440 788L565 799Q573 801 580 807Q605 826 640 840Q658 847 680 848L850 853H950Q965 851 975 840Q986 826 989 812Q990 800 1002 799H1060Q1066 798 1067 793A13 14 0 0 1 1094 793L1097 805V881L1071 909L1000 908L850 906L700 900L570 891L420 873L350 865Q300 857 250 843Q200 823 165 809Q140 800 100 786Z';

const arrows = [[87, 817], [200, 862], [320, 885], [402, 887], [472, 889], [542, 889], [648, 892]];
const holes = [[289, 813, 3], [355, 825, 3], [508, 842, 3.5], [1079, 802, 4], [1081, 842, 4], [977, 886, 3], [1068, 890, 3], [1098, 862, 3], [376, 849, 2.5], [284, 838, 2]];
const wingHoles = [[60, 731, 2.2], [94, 756, 3.5], [131, 772, 2.2], [58, 778, 2], [94, 800, 3.2], [131, 812, 2]];

const Model = () => (
  <Scene width="1235" height="812" viewBox="45 116 1235 812">
    <defs>
      <clipPath id="skin"><path d={SKIN} /></clipPath>
      <clipPath id="tab"><path d="M190 816L240 815L300 822Q318 818 325 805Q330 798 340 798H565L578 806V826L545 846L500 870L470 874L420 872L350 862L290 850L235 834Z" /></clipPath>
      <clipPath id="dl"><path d="M80 785L120 798L150 808L200 822L250 842L300 856L420 872L560 881H500L420 883L300 877L250 869L200 855L150 838L120 822Z" /></clipPath>
      <clipPath id="dw"><path d="M64 768L90 776L300 850V868L200 858L90 810L80 795Z" /></clipPath>
      <clipPath id="dr"><path d={DARK_RIGHT} /></clipPath>
      <linearGradient id="hot" x1="565" x2="990" y1="0" y2="0" gradientUnits="userSpaceOnUse">
        <stop offset="0" stopColor="#1fe070" /><stop offset=".15" stopColor="#b8f000" /><stop offset=".3" stopColor="#c8ff00" />
        <stop offset=".42" stopColor="#70f800" /><stop offset=".58" stopColor="#00e840" /><stop offset=".72" stopColor="#00e8b0" /><stop offset=".88" stopColor="#00b8ff" /><stop offset="1" stopColor="#0048ff" />
      </linearGradient>
      <linearGradient id="aqua" x1="400" x2="985" y1="0" y2="0" gradientUnits="userSpaceOnUse">
        <stop offset="0" stopColor="#0090ff" /><stop offset=".2" stopColor="#00c8ff" /><stop offset=".5" stopColor="#00f4e0" />
        <stop offset=".75" stopColor="#00c0ff" /><stop offset="1" stopColor="#0040ff" />
      </linearGradient>
      <linearGradient id="low" x1="430" x2="990" y1="0" y2="0" gradientUnits="userSpaceOnUse">
        <stop offset="0" stopColor="#00b8d0" /><stop offset=".2" stopColor="#10c030" /><stop offset=".42" stopColor="#5aa800" />
        <stop offset=".6" stopColor="#10b818" /><stop offset=".8" stopColor="#00a080" /><stop offset=".92" stopColor="#0068d0" /><stop offset="1" stopColor="#0010f0" />
      </linearGradient>
      <filter id="soft"><feGaussianBlur stdDeviation="2.500" /></filter>
      <filter id="soft1"><feGaussianBlur stdDeviation="1.200" /></filter>
    </defs>

    <path d={DARK_LEFT} fill="#2f2f2f" />
    <path d={bodySpots.spots} fill="#c6c6c8" clipPath="url(#dl)" />
    <path d={thinSpots.spots} fill="#a8a8aa" clipPath="url(#dw)" />
    <path d={DARK_RIGHT} fill="#2f2f2f" />
    <path d={rightSpots.spots} fill="#b9b9bb" clipPath="url(#dr)" opacity=".9" />
    <path d={DARK_RIGHT} fill="none" stroke="#2a2a2a" strokeWidth="2" />

    <path d={SKIN} fill="#0000ff" />
    <g clipPath="url(#skin)">
      {/* left wing bands */}
      <path d="M150 762Q190 795 245 812Q300 826 350 832L640 840V700H148z" fill="#0048ff" />
      <path d="M170 772Q210 800 262 812Q300 822 360 832L600 850V700H170z" fill="#0058ff" />
      <path d="M215 700V792Q258 792 275 803Q286 812 281 820L312 818Q320 812 326 800L350 782L600 850V700z" fill="#0084ff" />
      <path d="M240 784Q268 791 280 804Q298 812 318 804Q328 794 342 790L380 788L600 850V700H240z" fill="#00b4ff" />
      <path d="M278 795Q305 808 322 789L328 790Q318 808 300 807Q286 804 278 799z" fill="#00e0ff" />
      <path d="M290 797Q308 803 319 790L323 791Q314 805 300 803z" fill="#28f0a0" />
      <path d="M322 790Q328 776 352 779Q345 790 325 787z" fill="#0054ff" />
      <path d="M350 779L372 782Q390 792 420 800H335Q325 798 326 792Q345 788 350 779z" fill="#00a0ff" />
      <path d="M366 780L440 786L565 799L580 808V830L470 805L420 799Q390 792 366 780z" fill="#00d8f4" />
      <path d="M405 783L440 788L565 799L570 808L450 799z" fill="#00f0c8" />
      <path d="M480 791L565 798L590 814L570 822L520 800z" fill="#10dc80" filter="url(#soft1)" />
      {/* tab */}
      <path d="M318 806Q330 798 345 798H500L560 799L580 808V850H430Q360 825 316 822z" fill="#0094e8" />
      <path d="M430 799H570V846H530Q480 832 430 806z" fill="#10b0c0" filter="url(#soft)" />
      <path d="M430 822Q480 828 520 836L545 846H430z" fill="#0090f0" filter="url(#soft1)" />
      <path d="M200 816Q270 815 320 830L352 814Q380 812 410 818Q450 824 480 840L560 842L600 850V870L330 850L290 840z" fill="#0028e0" />
      {/* lower flange of the left part */}
      <path d="M120 790Q230 835 310 852L420 862L640 876V915L420 880L230 850z" fill="#0018c0" />
      <path d="M130 792Q230 826 300 842Q400 858 560 862V872L420 876L300 862L190 820z" fill="#0060e8" opacity=".8" filter="url(#soft1)" />
      <path d="M170 808Q220 826 250 838Q300 854 430 866L560 880V894L420 874L300 858Q240 845 170 812z" fill="#00a8ff" filter="url(#soft1)" />
      {/* high stress arc */}
      <path d="M560 800L600 822L690 848L820 852L820 862H600Q575 850 540 838z" fill="#00e8e8" filter="url(#soft1)" />
      <path d="M566 800L700 848L780 850V860H640Q600 852 566 828z" fill="#00f040" filter="url(#soft)" />
      <path d="M576 804L640 834L740 846V856H670Q610 850 580 824z" fill="#c8ff00" filter="url(#soft1)" />
      <path d="M588 812L640 836L700 846V852H660Q620 844 594 824z" fill="#ffa800" filter="url(#soft1)" />
      <path d="M604 822Q640 842 682 848L676 851Q640 848 610 829z" fill="#ff2000" filter="url(#soft1)" />
      <path d="M680 847L990 853V860H660z" fill="url(#hot)" />
      <path d="M560 857H990V868H700L600 862z" fill="url(#aqua)" />
      <path d="M500 856Q535 840 562 843Q580 852 620 862L720 870H985V884H700L560 872z" fill="#0038f4" />
      <path d="M430 862H520Q600 872 700 880L980 886V896L640 893L430 876z" fill="url(#aqua)" />
      <path d="M560 846Q600 860 720 866L900 871V877L780 886Q660 884 560 862z" fill="#0040ff" />
      <path d="M470 866Q540 870 640 886L900 892L640 900L540 888z" fill="#00e8c0" filter="url(#soft1)" opacity=".85" />
      <path d="M430 870L560 881L700 893L990 899V912H700L430 880z" fill="url(#low)" />
      {/* right block */}
      <path d="M850 862Q900 856 950 854L978 848V870L850 872z" fill="#00a8ff" filter="url(#soft1)" />
      <path d="M900 866Q950 862 978 838V870L900 872z" fill="#0068ff" />
      <path d="M1100 700H985V836L968 860L920 872L980 880L970 896L1000 912H1100z" fill="#0000ff" />
      <path d="M860 884Q920 876 970 880L975 884L900 886z" fill="#0010ff" />
      <path d="M976 840L980 836V850Q974 862 960 864z" fill="#0070ff" />
    </g>

    {/* mesh over the tab */}
    <path d={tabMesh.d} fill="none" stroke="#10223c" strokeWidth=".55" clipPath="url(#tab)" opacity=".85" />
    <path d="M325 803Q330 798 340 798H565" fill="none" stroke="#222" strokeWidth="1.200" />

    {/* flanges and edges */}
    <path d="M62 716L115 751Q200 802 290 825Q340 838 420 842Q520 848 600 862Q760 873 1097 875" fill="none" stroke="#000078" strokeWidth="2.600" />
    <path d="M75 730L130 764Q210 806 290 829Q360 843 440 848Q540 856 640 866" fill="none" stroke="#0000b8" strokeWidth="1.200" />
    <path d="M45 745L100 783Q130 797 160 806" fill="none" stroke="#00008c" strokeWidth="3" />
    <path d="M360 855L420 857H565L1097 859" fill="none" stroke="#24303a" strokeWidth="3.600" />
    <path d="M565 857.500L1000 859" fill="none" stroke="#8aa" strokeWidth=".9" strokeDasharray="1 3" />
    <path d="M560 885L1080 889" fill="none" stroke="#24303a" strokeWidth="3.600" />
    <path d="M560 885.500L960 888.500" fill="none" stroke="#6a9" strokeWidth=".9" strokeDasharray="1 3" />
    <path d="M640 864L860 872L1097 876" fill="none" stroke="#103060" strokeWidth="2.400" />
    <path d="M420 872L700 893L1000 902" fill="none" stroke="#0a6030" strokeWidth="1" />
    <path d="M980 901L1075 902" fill="none" stroke="#000090" strokeWidth="2" />
    <path d={SKIN} fill="none" stroke="#10203a" strokeWidth=".7" />
    <path d="M1096 785V868" stroke="#2b2b2b" strokeWidth="2" />
    <path d="M430 890H565L540 883L430 882z" fill="#2f2f2f" />

    {/* slots and holes */}
    <path d="M58 741Q60 738 66 740L76 747Q80 752 78 756Q74 757 68 754L60 748Q57 745 58 741z" fill="#bcbcc2" stroke="#003" strokeWidth=".7" />
    <path d="M58 789Q60 785 66 788L76 795Q79 799 77 801Q72 803 66 799L59 795Q57 792 58 789z" fill="#bcbcc2" />
    {wingHoles.map(([x, y, r], i) => <circle key={i} cx={x} cy={y} r={r} fill="#c4c4c8" stroke="#113" strokeWidth=".7" />)}
    {holes.map(([x, y, r], i) => <g key={i}><circle cx={x} cy={y} r={r} fill="#2e3136" /><circle cx={x} cy={y} r={r * 0.4} fill="#667" /></g>)}
    <circle cx="289" cy="813" r="2.200" fill="#c8c8cc" />

    {/* remote force cone */}
    <path d="M1084 784L1096 786L1274 828L1097 796z" fill="#8b0c0c" />
    <path d="M1097 823L1274 828M1097 827L1274 828.500M1097 831L1274 829" stroke="#8b1414" strokeWidth="1.300" />
    <path d="M1097 788L1274 828M1097 791L1274 828" stroke="#5e0808" strokeWidth=".6" />

    {/* loads */}
    <path d="M290 827V845M357 824V845" stroke="#1890d0" strokeWidth="1.600" />
    <path d="M290 838L293 863Q288 868 285 864zM357 843L361 868L354 868zM1069 848L1074 848L1073 870L1068 868L1071 860z" fill="#8b0a12" />
    {arrows.map(([x, y], i) => (
      <g key={i}><path d={`M${x - 1} ${y + 17}V${y + 6}M${x + 1.5} ${y + 14}V${y + 4}`} stroke="#2a86e6" strokeWidth="1.700" /><path d={`M${x - 3} ${y + 6}L${x + 1} ${y - 1}L${x + 3} ${y + 6}z`} fill="#2a86e6" /></g>
    ))}
    <path d="M1274 829V808M824 892V906M1001 892V907" stroke="#1f8fe8" strokeWidth="1" />
    <path d="M1271.500 813L1274 804L1277 813z" fill="#1f8fe8" />

    {/* coordinate axes */}
    <path d="M102.500 868V838" stroke="#6fd074" strokeWidth="3.200" /><path d="M99 840L102.500 828L106 840z" fill="#57c95c" />
    <path d="M100 869H72" stroke="#e07272" strokeWidth="2.800" /><path d="M76 865.500L62 868.800L76 872z" fill="#d65a5a" />
    <path d="M102 870L96 876" stroke="#1b4f86" strokeWidth="3.500" />
    <circle cx="104" cy="869" r="5.500" fill="#d8d33c" /><circle cx="102.500" cy="867" r="2" fill="#f5f2a0" />
    <g fontFamily="Liberation Sans, sans-serif" fontSize="10">
      <text x="50" y="872" fill="#d04848">X</text><text x="90" y="883" fill="#4a80c8">Z</text><text x="99" y="823" fill="#206a20">Y</text>
    </g>

    {/* extreme value labels */}
    <g fontFamily="Liberation Sans, sans-serif" fontSize="18.500" fill="#000">
      <text x="59" y="719" textLength="35" lengthAdjust="spacingAndGlyphs">MIN</text><text x="565" y="823" textLength="41" lengthAdjust="spacingAndGlyphs">MAX</text>
    </g>
    <path d="M59 723.500H95M564 829.500H609" stroke="#fff" strokeWidth="2.200" />
  </Scene>
);

/* ---------- legend data ---------- */
const legendColors = ['#ff0000', '#ff4400', '#ff8800', '#ffcc00', '#eeff00', '#aaff00', '#66ff00', '#22ff00', '#00ff22', '#00ff66', '#00ffaa', '#00ffee', '#00ccff', '#0088ff', '#0044ff', '#0000ff'];
const legendValues = ['150.1', '140.8', '131.4', '122', '112.6', '103.2', '93.84', '84.46', '75.07', '65.69', '56.31', '46.93', '37.54', '28.16', '18.78', '9.394', '0.01135'];

const LegendPanel = () => (
  <Legend>
    <LegendTitle>SVM[Н/мм^2]</LegendTitle>
    <LegendLogo>
      <svg width="76" height="20" viewBox="0 0 76 20">
        <path d="M.7.700H20V16H.7z" fill="#fff" stroke="#333" strokeWidth="1.200" />
        <path d="M10.500 1 2 16.500h3.500L8 12l2.500 5 2.500-5 2.500 4.500H19z" fill="#fff" stroke="#333" strokeWidth="1.200" />
        <path d="M8 11.500h5L10.500 6z" fill="#fff" stroke="#333" strokeWidth="1.200" />
        <text x="23" y="15.500" fontFamily="Liberation Sans, sans-serif" fontWeight="700" fontSize="17.500" textLength="47" lengthAdjust="spacingAndGlyphs" fill="#fff" stroke="#333" strokeWidth="1">АПМ</text>
      </svg>
    </LegendLogo>
    <LegendBody>
      <LegendBar>{legendColors.map(x => <Swatch key={x} $c={x} />)}</LegendBar>
      <LegendValues>{legendValues.map(x => <LegendValue key={x}>{x}</LegendValue>)}</LegendValues>
    </LegendBody>
  </Legend>
);

const ParamsPanel = () => (
  <Params>
    <ParamsTitle>Параметры отображения</ParamsTitle>
    <FieldSet $h={134}>
      <Caption>Глубина просмотра</Caption>
      <Row $h={22}>
        <Select>В плоскости экрана<Chevron /></Select>
        <SquareButton>
          <svg width="18" height="18" viewBox="0 0 18 18"><path d="m5 3 6-2 6 3v8l-4 3z" fill="#3a5a8c" /><path d="m2 4 6-1.500 6 3V17l-3-2-4 .5-5-3z" fill="#e2503c" stroke="#7c1d14" strokeWidth=".8" /><path d="m2 4 6.500 3 5.500-1.500M8.500 7v8" fill="none" stroke="#7c1d14" /></svg>
        </SquareButton>
      </Row>
      <Row $h={39}>
        <SliderBox>
          <Ticks>{Array.from({ length: 11 }, (_, i) => <Tick key={i} />)}</Ticks>
          <Track><Thumb /></Track>
          <Ticks>{Array.from({ length: 11 }, (_, i) => <Tick key={i} />)}</Ticks>
        </SliderBox>
        <Percent $h={20}><NumField $w={26}>0</NumField>%</Percent>
      </Row>
      <Row $h={25}>
        <Distance>Расстояние от плоскости, [мм]</Distance>
        <NumField $w={40}>0.000</NumField>
      </Row>
      <Check><CheckBox />Результаты в сечении</Check>
      <Check><CheckBox />Инвертировать вид</Check>
    </FieldSet>
    <FieldSet $h={45}>
      <Caption>Фильтры вида</Caption>
      <FilterRow>
        <SquareButton $on><svg width="21" height="20" viewBox="0 0 21 20"><path d="M0 1.500h21" stroke="#d44" strokeWidth="2" /><path d="M0 18.500h21" stroke="#2b70c8" strokeWidth="2.600" /><text x="0" y="14.500" fontFamily="Open Sans, sans-serif" fontWeight="600" fontSize="12" textLength="21" lengthAdjust="spacingAndGlyphs" fill="#222">EXT</text></svg></SquareButton>
        <SquareButton $on><svg width="21" height="20" viewBox="0 0 21 20"><text x="5" y="9.500" fontFamily="Open Sans, sans-serif" fontWeight="700" fontSize="8" textLength="15" fill="#222">123</text><path d="m1 19 6-7h13" fill="none" stroke="#d44" strokeWidth="1.300" /></svg></SquareButton>
        <SquareButton><svg width="21" height="20" viewBox="0 0 21 20" fill="none" strokeWidth="1.200"><path d="M1 17Q10.500-14 20 17" stroke="#d44" /><path d="M1 17.500Q10.500-6 20 17.500" stroke="#e8a030" /><path d="M1 18Q10.500 2 20 18" stroke="#5a5" /><path d="M1 18.500Q10.500 9 20 18.500" stroke="#247" /></svg></SquareButton>
        <SquareButton><svg width="21" height="20" viewBox="0 0 21 20" fill="none" stroke="#333" strokeWidth=".9"><path d="m2 17 3-9 4-5h11l-3 9-4 6M5 8h9l6-5M14 8l-2 9M9 8l-3 9 3-4M3 13h9l5-6M9 3 7 8l5 5 2-5 3-5-1 6" /></svg></SquareButton>
        <SquareButton $on><svg width="21" height="20" viewBox="0 0 21 20" fill="none" stroke="#234" strokeWidth=".9"><path d="M2 6h11v12M2 6v12M2 6l5-4h12v11l-6 5M13 6l6-4M2 12h11l6-5M7.500 6v12M12 2 7.500 6M2 12l5.500-6M7.500 12 13 6M2 18l5.500-6M7.500 18l5.500-6M16 4v12" /></svg></SquareButton>
        <SquareButton><svg width="21" height="20" viewBox="0 0 21 20"><path d="M0 1h8v4H0z" fill="#e33" /><path d="M0 5h8v3H0z" fill="#f6a020" /><path d="M0 8h8v3H0z" fill="#f0e030" /><path d="M0 11h8v3H0z" fill="#3b3" /><path d="M0 14h8v5H0z" fill="#38c" /><path d="M9 3.500v13L20 10z" fill="#222" /></svg></SquareButton>
      </FilterRow>
    </FieldSet>
    <Row $h={20}>
      <span>Диапазон отображения КЭ</span><RangeLine />
      <svg width="13" height="13" viewBox="0 0 13 13"><circle cx="6.500" cy="6.500" r="5.500" fill="#e6e6e6" stroke="#999" /><path d="m4 5 2.500 3L9 5" fill="none" stroke="#333" strokeWidth="1.200" /></svg>
    </Row>
  </Params>
);

/* ---------- task bar art ---------- */
const T = ({ children }: { children: ReactNode }) => <svg width="26" height="26" viewBox="0 0 26 26">{children}</svg>;
const folder = (extra?: ReactNode) => (
  <T><path d="M13 4h5l1 12 2 1v5l-8 2z" fill="#d9bf62" /><path d="m5 3 10-1 1 1 1 18-4 3-8-3z" fill="#f7e9a5" stroke="#caae58" strokeWidth=".6" /><path d="M12 5v19" stroke="#e0c878" />{extra}</T>
);
const down = <path d="M15 11h5v7h3.500l-6 7-6-7H15z" fill="#2a9be8" stroke="#1678c0" strokeWidth=".6" />;
const monitor = <><path d="m4 2 17 1 1 15-15 0z" fill="#1638c0" stroke="#dfe7f2" /><path d="m5.500 3.500 10 .5-8 10z" fill="#8fb6f4" /><path d="m10 19.500 8-1 4 4-11 1z" fill="#e4e4e4" /></>;
const apps: [number, 'none' | 'tile' | 'active', ReactNode][] = [
  [41, 'none', <T><path d="m2.500 4.500 9-1.500V12H2.500zM12.500 2.800 23 1.500V12H12.500zM2.500 13h9v9L2.500 20.500zM12.500 13H23v10.500L12.500 22z" fill="#fff" /></T>],
  [48, 'tile', <T><circle cx="13" cy="13" r="12.300" fill="#2ea44f" /><path d="M13 .7A12.300 12.300 0 0 1 24 7.500H13a5.500 5.500 0 0 0-5.300 4L2.500 6.500A12.300 12.300 0 0 1 13 .7z" fill="#e33b2e" /><path d="M24 7.500a12.300 12.300 0 0 1-12 17.700l6-9.500a5.500 5.500 0 0 0-2-8.200z" fill="#fbc116" /><circle cx="13" cy="13" r="5.800" fill="#fff" /><circle cx="13" cy="13" r="4.500" fill="#2f7be5" /></T>],
  [45, 'tile', folder()], [46, 'tile', folder(down)],
  [46, 'tile', <T><path d="m10 2 8-1 1 13 2 1-1 4-7 1-3-2z" fill="#f7e9a5" stroke="#caae58" strokeWidth=".6" /><path d="m1 21 5-3v2h12v3H6v1.500z" fill="#2cb040" /><path d="M9 18.500h5v6H9z" fill="#e8f4e8" stroke="#2cb040" strokeWidth=".8" /></T>], [46, 'tile', folder(down)], [46, 'tile', folder()],
  [49, 'tile', <T>{monitor}<circle cx="20" cy="19" r="5.500" fill="#e9efe4" stroke="#9aa" /><path d="m17 17 2.500 2-2 2M23 16.500 20.500 19l2 2.500" fill="none" stroke="#2c9a2c" strokeWidth="1.300" /></T>],
  [43, 'none', <T><path d="M1 2h3L19 0l6 3v23H1z" fill="#68217a" /><path d="m4 8 2.500-1 5 4.500 7-7 3.500 1.500v15l-3.500 1.500-7-7-5 4.500L4 19zM6.500 11v5l2.500-2.500zM18.500 10l-4.500 3.500 4.500 3.500z" fill="#fff" fillRule="evenodd" /></T>],
  [46, 'tile', <T><rect x="1" y="1" width="17" height="17" rx="8" fill="#12a5ea" /><rect x="8" y="8" width="17" height="17" rx="8" fill="#12a5ea" /><circle cx="13" cy="13" r="10.500" fill="#12a5ea" /><text x="8" y="19" fontFamily="Open Sans, sans-serif" fontWeight="700" fontSize="17" fill="#fff">S</text></T>],
  [43, 'none', <T><path d="m2 12 4-4h10l-2 13-5 4-7-2z" fill="#5fd8d8" stroke="#0d3c3c" /><path d="M2 12h10v12M2 16h10M2 20h10M6 12v12M12 16l4-4M12 20l3-3M12 12l4-4" stroke="#0d3c3c" fill="none" /><path d="M14 0h4v4h-4zM21 3h4v4h-4zM17 7h4v4h-4z" fill="#7feaea" stroke="#0d4c4c" strokeWidth=".8" /></T>],
  [42, 'none', <T><path d="M4 15q8-12 15 0z" fill="#6a6a76" stroke="#333" /><path d="m7 11 3 3 3-4 3 4" stroke="#bbb" fill="none" /><path d="M3 15h17l2-2 1 2-3 3h-3l-1-1-6 0-3 4-2-1 1-3z" fill="#7f9048" /><ellipse cx="23" cy="10.500" rx="3" ry="2.500" fill="#8a9c50" /><path d="M2 14 0 12l4 0z" fill="#6d7a38" /></T>],
  [41, 'none', <T><circle cx="13" cy="13" r="12" fill="#2b62b8" /><path d="M4 5q8-6 17 0-6-1-9 4z" fill="#7ab4f0" /><path d="m3 11 15-2 2 10-13 3z" fill="#f5f5f5" stroke="#bbb" /><path d="m3 11 9 6 6-8" fill="none" stroke="#bbb" /></T>],
  [46, 'tile', <T><path fillRule="evenodd" d="M13 .7C20 .7 25 6 25 13s-5 12.300-12 12.300S1 20 1 13 6 .7 13 .7zM13 4.500c-3.500 0-5 4-5 8.500s1.500 8.500 5 8.500 5-4 5-8.500-1.500-8.500-5-8.500z" fill="#e0202c" /></T>],
  [46, 'tile', <T><circle cx="12" cy="12.500" r="11.500" fill="#2da3dd" /><path d="m4 12 15-6-2.500 13-5-3.500-2.500 2.500-.5-4.500 7-6-9 5.500z" fill="#fff" /><rect x="12" y="17" width="13" height="8.500" rx="2" fill="#e8413c" /><text x="14" y="24" fontFamily="Open Sans, sans-serif" fontWeight="700" fontSize="7" fill="#fff">.10</text></T>],
  [43, 'none', <T><path d="m3 5 6 0 6 8 6 9-3 3-4-1-4-9z" fill="#d2463c" /><path d="m20 0 4 4-1 4-2-1L10 24l-5 1 0-4L17 7l-2-3z" fill="#3fae49" /></T>],
  [46, 'tile', <T><path d="M1 1h24v24H1z" fill="#1b2fa8" /><path d="M8 1h11v8H8z" fill="#dfe3ee" /><path d="M14 2h3v6h-3z" fill="#1b2fa8" /><path d="M3 13h20v12H3z" fill="#fff" /><path d="M4 16h18M4 19.500h18M4 23h9" stroke="#cc3f44" strokeWidth="1.200" /></T>],
  [47, 'tile', <T>{monitor}<path d="M0 7h16v7H0z" fill="#2b86e8" /><path d="M2 10.500h12" stroke="#fff" strokeDasharray="2 1" strokeWidth="3" /></T>],
  [46, 'tile', <T><path d="M1 7h7v14H1z" fill="#d9dce0" stroke="#999" /><path d="M6 5h18v13H6z" fill="#eef2f5" stroke="#999" /><path d="m8 14 3-1 2-5 3 7 2-3 4 1" fill="none" stroke="#3a8ac8" /><path d="m12 19 8 0 3 4H11z" fill="#ddd" /></T>],
  [48, 'tile', <T><path d="M20 4A11 11 0 1 0 20 22" fill="none" stroke="#2c9fd0" strokeWidth="3" /><path d="M20 4a11 11 0 0 1 2 16" fill="none" stroke="#8cc8e0" strokeWidth="2" /><path d="M0 9h8v8H0zM18 4h4v4h-4zM20 19h5v5h-5z" fill="#f0802a" /></T>],
  [48, 'tile', <T><path d="m2 4 12-3 10 20-11 4z" fill="#eef5fa" stroke="#7a9ab8" /><path d="m4 6 9-3 3 6-9 3z" fill="#a9dcf5" /><path d="m8 14 4-1 2 4-4 1z" fill="#4b4" /><path d="m14 12 4-1 2 4-4 1zM13 19l8-2 2 4-8 2z" fill="#57a" /></T>],
  [47, 'tile', <T><path d="M2 13Q4 5 14 6q9 2 8 9-3 8-11 8-2-4-5-3-5-1-4-7z" fill="#bfe0f2" stroke="#7aa" /><circle cx="7" cy="12" r="2" fill="#d44" /><circle cx="12" cy="9.500" r="2" fill="#5b5" /><circle cx="9" cy="17" r="2" fill="#e8c030" /><path d="m23 3-7 20" stroke="#d08830" strokeWidth="2.500" /><path d="m19 1 6 2-2 4-4-1z" fill="#e09a40" /></T>],
  [47, 'tile', <T><path d="M4 1h18v24H4z" fill="#cfe4f4" stroke="#5b93c4" /><path d="M6 3h11v6H6z" fill="#f8fcff" stroke="#7ab" strokeWidth=".6" /><path d="M6 13h14M6 17h14M6 21h14" stroke="#6b9ac4" strokeWidth="2.400" strokeDasharray="3 1.500" /><path d="M17 19h4v5h-4z" fill="#e8a050" /></T>],
  [47, 'tile', <T><path d="M4 1h14l4 4v20H4z" fill="#fff" stroke="#d22" strokeWidth="1.200" /><path d="M8 15c5-3 6-8 5-10s-2 2 1 5 6 4 5 2-7-1-11 3z" fill="none" stroke="#d22" strokeWidth="1.300" /><text x="7.500" y="23" fontFamily="Open Sans, sans-serif" fontWeight="700" fontSize="6" fill="#222">PDF</text></T>],
  [46, 'active', <T><path d="M0 0h26v26H0z" fill="#1d2a36" /><circle cx="13" cy="13" r="10" fill="none" stroke="#2e94cc" strokeWidth="1.600" /><path d="M9 5v16M9 13l8-8M11 13l7 7M12 10l7-3M12 15l3 6" stroke="#2e94cc" strokeWidth="1.500" fill="none" /></T>],
];

const IconCells = ({ items }: { items: string[] }) => (
  <>{items.map((n, i) => (n === 'ds' ? <DsText key={i}>DS</DsText> : n.startsWith('-') ? <Dim key={i}><Icon n={n.slice(1)} s={14} /></Dim> : <Icon key={i} n={n} s={14} />))}</>
);

export default function App() {
  return (
    <Screen>
      <Global />
      <MenuBar>
        <svg width="17" height="17" viewBox="0 0 17 17"><path d="M0 0h17v17H0z" fill="#162a38" /><circle cx="8.500" cy="8.500" r="6.500" fill="none" stroke="#1e9fe0" strokeWidth="1.500" /><path d="M5.500 3.500v10M5.500 8.500 11 3.500M7 8.500l5 4.500M8 7h4" stroke="#1e9fe0" fill="none" strokeWidth="1.300" /></svg>
        <Menu>{menu.map(([t, w]) => <MenuItem key={t} $w={w}>{t}</MenuItem>)}</Menu>
        <svg width="34" height="11" viewBox="0 0 34 11"><path d="M.7.8h11.800v9H.7z" fill="none" stroke="#555" strokeWidth="1.200" /><path d="M.7 2h12" stroke="#555" /><path d="M21.500.8h12v9h-12z" fill="#eee" stroke="#444" strokeWidth="1.200" /><path d="M21.500 2h12" stroke="#444" /><circle cx="27.500" cy="5.800" r="2" fill="none" stroke="#222" strokeWidth="2" /></svg>
        <Search>
          <svg width="10" height="10" viewBox="0 0 10 10"><circle cx="6" cy="4" r="3" fill="none" stroke="#aaa" /><path d="M4 6.200.8 9.400" stroke="#aaa" strokeWidth="1.200" /></svg>
          Поиск по командам (Alt+/)
        </Search>
        <WindowButtons>
          <svg width="12" height="10" viewBox="0 0 12 10"><path d="M1 8.500h10" stroke="#333" strokeWidth="1.800" /></svg>
          <svg width="12" height="10" viewBox="0 0 12 10"><path d="M1 3.500h7.500V9H1zM3 3V1h8v5.500H9M1 4h7.500" fill="none" stroke="#333" strokeWidth="1.100" /></svg>
          <svg width="10" height="10" viewBox="0 0 10 10"><path d="m1.500 1.500 7 7M8.500 1.500l-7 7" stroke="#333" strokeWidth="1.700" /></svg>
        </WindowButtons>
      </MenuBar>

      <TabBar>
        <HomeTab>
          <svg width="12" height="11" viewBox="0 0 12 11"><path d="M1 4.500 6 .5l5 4V10.500H7.500V7h-3v3.500H1z" fill="#222" /></svg>
          <svg width="6" height="3" viewBox="0 0 6 3"><path d="M0 0h6L3 3z" fill="#333" /></svg>
        </HomeTab>
        <DocTab>
          <svg width="12" height="12" viewBox="0 0 12 12"><path d="M1 0h8l3 3v9H1z" fill="#fff" /><circle cx="6.500" cy="6.500" r="3" fill="none" stroke="#555" strokeWidth="1.500" /><path d="M6.500 6.500V3.500h3v3z" fill="#555" /></svg>
          <DocName>L30201562.m3d</DocName>
          <svg width="13" height="7" viewBox="0 0 13 7"><path d="m1 .7 5 5M6 .7l-5 5" stroke="#fff" strokeWidth="1.500" /></svg>
        </DocTab>
      </TabBar>

      <Ribbon>
        <Group $w={97}>
          <GroupBody>
            <Column $w={96}>
              <Command><Icon n="solid" />{'Твердотельное\nмоделирование'}</Command>
              <Command><Icon n="surface" />{'Каркас и\nповерхности'}</Command>
              <Command $state="on"><Icon n="apm" />APM FEM</Command>
            </Column>
          </GroupBody>
          <GroupFoot><FootName><svg width="96" height="6" viewBox="-42 0 96 6"><path d="m2 .5 3 2 3-2M2 3.200l3 2 3-2" fill="none" stroke="#333" strokeWidth=".9" /></svg></FootName></GroupFoot>
        </Group>
        <Group $w={63}>
          <GroupBody><IconGrid $cols={3}><IconCells items={['file', 'open', 'save', 'print', 'preview', 'saveas', 'undo', 'redo']} /></IconGrid></GroupBody>
          <GroupFoot><FootName>Системная</FootName><Grip /></GroupFoot>
        </Group>
        {groups.map(g => (
          <Group key={g.name} $w={g.w}>
            <GroupBody>
              {g.cols.map((col, i) => (
                <Column key={i} $w={col.w}>
                  {col.items.map(([ic, t, st]) => <Command key={t} $state={st}><Icon n={ic} />{t}</Command>)}
                </Column>
              ))}
            </GroupBody>
            <GroupFoot><FootName>{g.name}</FootName>{g.caret && <Caret />}<Grip /></GroupFoot>
          </Group>
        ))}
        <Group $w={63}>
          <GroupBody><IconGrid $cols={3}><IconCells items={['mesh', 'r2', 'r3', '-r4', '-r5', 'r6', 'r7', 'r8', 'r9']} /></IconGrid></GroupBody>
          <GroupFoot><FootName>Результа...</FootName><Caret /><Grip /></GroupFoot>
        </Group>
        <Group $w={63}>
          <GroupBody><IconGrid $cols={3}><IconCells items={['t1', 't2', 'ds', 't4', 't5', 't6', 'calc', 'calcpar', 'stl']} /></IconGrid></GroupBody>
          <GroupFoot><FootName>Тополог...</FootName><Caret /><Grip /></GroupFoot>
        </Group>
        <Group $w={22}>
          <GroupBody><IconGrid $cols={1}><IconCells items={['list', 'cut', 'camera']} /></IconGrid></GroupBody>
          <GroupFoot><Caret /><Grip /></GroupFoot>
        </Group>
      </Ribbon>

      <Work>
        <SideBar $bg="#d0d0d0">
          <SideButton $active><Icon n="treeico" /></SideButton>
          <SideButton><Fx>fx</Fx></SideButton>
          <SideButton><Icon n="burger" s={13} /></SideButton>
        </SideBar>
        <SideBar $bg="#cbcbcb"><SideButton $active><Icon n="props" /></SideButton></SideBar>
        <Viewport>
          <Model />
          <LegendPanel />
          <ParamsPanel />
          <ViewToolbar>
            <Tool $w={22} $sep><Icon n="calc" /></Tool>
            <Tool $w={14}><Icon n="snap" s={11} /></Tool>
            <Tool $w={3} $sep />
            <Tool $w={20}><Icon n="place" s={13} /></Tool>
            <Tool $w={14}><Caret /></Tool>
            <Tool $w={23}><Icon n="place" /></Tool>
            <Tool $w={20}><Icon n="axes" /></Tool>
            <Tool $w={16}><Caret /></Tool>
            <Tool $w={4} $sep />
            <Tool $w={1} />
            <Tool $w={20} $active><Icon n="cube" /></Tool>
            <Tool $w={24}><Icon n="wire" /></Tool>
            <Tool $w={16}><Caret /></Tool>
            <Tool $w={2} $sep />
            <Tool $w={22}><Icon n="eye" /></Tool>
            <Tool $w={17}><Caret /></Tool>
            <Tool $w={20}><Icon n="cam2" /></Tool>
            <Tool $w={18}><Caret /></Tool>
            <Tool $w={4} $sep />
            <Tool $w={21} $active><Icon n="snap" /></Tool>
            <Tool $w={22}><Icon n="grid2" /></Tool>
            <Tool $w={21} $active><Icon n="sel" /></Tool>
            <Tool $w={22} $sep><Icon n="ruler" /></Tool>
            <Tool $w={1} />
            <Tool $w={37} $active><Icon n="funnel" /><Caret $light /></Tool>
            <Tool $w={23}><Icon n="scheme" /></Tool>
            <Tool $w={20}><Icon n="pen" /></Tool>
          </ViewToolbar>
        </Viewport>
        <Dialog>
          <DialogTitle><TitleGrip /><TitleText>Прочностной Анализ</TitleText><Gear /></DialogTitle>
          <DialogBody>
            <TreeBox>
              <Tree>{nodes.map((n, i) => <TreeLine key={i} n={n} />)}</Tree>
              <Scroll><ScrollEnd $h={30}><Chevron up /></ScrollEnd><ScrollThumb /><ScrollEnd $h={201} $low><Chevron /></ScrollEnd></Scroll>
            </TreeBox>
            <OuterScroll />
          </DialogBody>
        </Dialog>
      </Work>

      <TaskBar>
        {apps.map(([w, kind, art], i) => <Task key={i} $w={w} $tile={kind === 'tile'} $active={kind === 'active'}>{art}</Task>)}
        <Tray>
          <svg width="8" height="5" viewBox="0 0 8 5"><path d="M1 4.500 4 1l3 3.500z" fill="#fff" stroke="#777" strokeWidth=".5" /></svg>
          <Speaker><svg width="14" height="12" viewBox="0 0 14 12"><path d="M1 4h2.500L7 1v10L3.500 8H1z" fill="#fff" stroke="#777" strokeWidth=".7" /><path d="M8.500 4q1.500 2 0 4M10.500 2.500q2.500 3.500 0 7" fill="none" stroke="#fff" /></svg></Speaker>
          <Lang>РУС</Lang>
          <Clock>14:32<br />13.04.2024</Clock>
        </Tray>
      </TaskBar>
    </Screen>
  );
}
